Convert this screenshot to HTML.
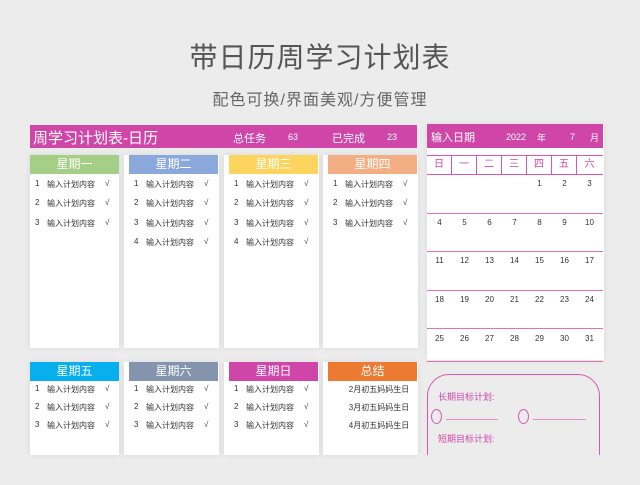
<!DOCTYPE html><html><head><meta charset="utf-8"><style>
*{margin:0;padding:0;box-sizing:border-box}
body{width:640px;height:485px;background:#ececec;font-family:"Liberation Sans","Noto Sans CJK SC",sans-serif;position:relative;overflow:hidden;color:#333}
.a{position:absolute}
.t{left:0;width:640px;text-align:center;color:#555}
.card{position:absolute;background:#fff;box-shadow:0 0 6px rgba(0,0,0,.08)}
.hd{position:absolute;height:19px;color:#fff;font-size:12px;text-align:center;line-height:19px}
.it{position:absolute;font-size:8px;color:#333;white-space:nowrap}
.cal{font-size:8px;color:#333;text-align:center;width:25px}
</style></head><body>
<div class="a t" style="top:36px;font-size:28px;letter-spacing:1px">带日历周学习计划表</div>
<div class="a t" style="top:86px;font-size:16px;color:#666;letter-spacing:1px">配色可换/界面美观/方便管理</div>
<div class="a" style="left:30px;top:125px;width:387px;height:23px;background:#cf45a8;color:#fff">
<span class="a" style="left:3px;top:2px;font-size:15px">周学习计划表-日历</span>
<span class="a" style="left:203px;top:5px;font-size:11px">总任务</span>
<span class="a" style="left:258px;top:7px;font-size:9px">63</span>
<span class="a" style="left:302px;top:5px;font-size:11px">已完成</span>
<span class="a" style="left:357px;top:7px;font-size:9px">23</span>
</div>
<div id="cards"></div>
<div class="card" style="left:427px;top:124px;width:177px;height:236px"></div>
<div class="a" style="left:427px;top:124px;width:176px;height:24px;background:#cf45a8;color:#fff">
<span class="a" style="left:4px;top:5px;font-size:11px">输入日期</span>
<span class="a" style="left:79px;top:8px;font-size:9px">2022</span>
<span class="a" style="left:110px;top:7px;font-size:9px">年</span>
<span class="a" style="left:143px;top:8px;font-size:9px">7</span>
<span class="a" style="left:163px;top:7px;font-size:9px">月</span>
</div>
<div class="a" style="left:427px;top:155px;width:176px;height:20px;border-top:1px solid #d957b4;border-bottom:1px solid #d957b4;display:flex">
<div class="cal" style="color:#cf45a8;font-size:10px;line-height:18px;border-right:1px solid #d957b4">日</div><div class="cal" style="color:#cf45a8;font-size:10px;line-height:18px;border-right:1px solid #d957b4">一</div><div class="cal" style="color:#cf45a8;font-size:10px;line-height:18px;border-right:1px solid #d957b4">二</div><div class="cal" style="color:#cf45a8;font-size:10px;line-height:18px;border-right:1px solid #d957b4">三</div><div class="cal" style="color:#cf45a8;font-size:10px;line-height:18px;border-right:1px solid #d957b4">四</div><div class="cal" style="color:#cf45a8;font-size:10px;line-height:18px;border-right:1px solid #d957b4">五</div><div class="cal" style="color:#cf45a8;font-size:10px;line-height:18px">六</div>
</div>
<div id="cal"></div>
<div class="a" style="left:427px;top:374px;width:173px;height:90px;border:1.5px solid #d957b4;border-radius:22px 22px 0 0"></div>
<div class="a" style="left:419px;top:455px;width:221px;height:30px;background:#ececec"></div>
<span class="a" style="left:438px;top:390px;font-size:9px;color:#cf45a8">长期目标计划:</span>
<div class="a" style="left:431px;top:409px;width:11px;height:15px;border:1px solid #d957b4;border-radius:50%"></div>
<div class="a" style="left:446px;top:419px;width:52px;border-top:1px solid #e58ccb"></div>
<div class="a" style="left:518px;top:409px;width:11px;height:15px;border:1px solid #d957b4;border-radius:50%"></div>
<div class="a" style="left:533px;top:419px;width:53px;border-top:1px solid #e58ccb"></div>
<span class="a" style="left:438px;top:432px;font-size:9px;color:#cf45a8">短期目标计划:</span>
<script>
var H='';
var topL=[["星期一","#a5cf86",3],["星期二","#8ba8dc",4],["星期三","#fdd45e",4],["星期四","#f4ae84",3]];
var botL=[["星期五","#07b0ec",3],["星期六","#8494ae",3],["星期日","#cf45a8",3],["总结","#ec7a30",0]];
var xs=[30,129,229,328];
function card(list,y,h,ry,gap){list.forEach(function(c,i){var x=xs[i];
H+='<div class="card" style="left:'+(i?x-5:x)+'px;top:'+y+'px;width:'+(i?95:89)+'px;height:'+h+'px"></div>';
H+='<div class="hd" style="left:'+x+'px;top:'+y+'px;width:89px;background:'+c[1]+'">'+c[0]+'</div>';
for(var k=0;k<c[2];k++){var yy=ry+k*gap;
H+='<span class="it" style="left:'+(x+5)+'px;top:'+yy+'px">'+(k+1)+'</span><span class="it" style="left:'+(x+17)+'px;top:'+yy+'px">输入计划内容</span><span class="it" style="left:'+(x+75)+'px;top:'+yy+'px">√</span>';}
if(c[2]==0){['2','3','4'].forEach(function(m,k){H+='<span class="it" style="left:'+(x+15)+'px;width:72px;text-align:center;top:'+(ry+k*gap)+'px">'+m+'月初五妈妈生日</span>';});}
});}
card(topL,155,193,179,19.3);
card(botL,362,93,384,18);
document.getElementById('cards').innerHTML=H;
var C='';var d=[['','','','','1','2','3'],['4','5','6','7','8','9','10'],['11','12','13','14','15','16','17'],['18','19','20','21','22','23','24'],['25','26','27','28','29','30','31']];
var rows=[179,218,256,295,334],lines=[213,251,290,328,361];
d.forEach(function(r,j){r.forEach(function(v,i){C+='<div class="a cal" style="left:'+(427+i*25)+'px;top:'+rows[j]+'px">'+v+'</div>';});
C+='<div class="a" style="left:427px;top:'+lines[j]+'px;width:176px;border-top:1px solid #e070c0"></div>';});
document.getElementById('cal').innerHTML=C;
</script>
</body></html>
